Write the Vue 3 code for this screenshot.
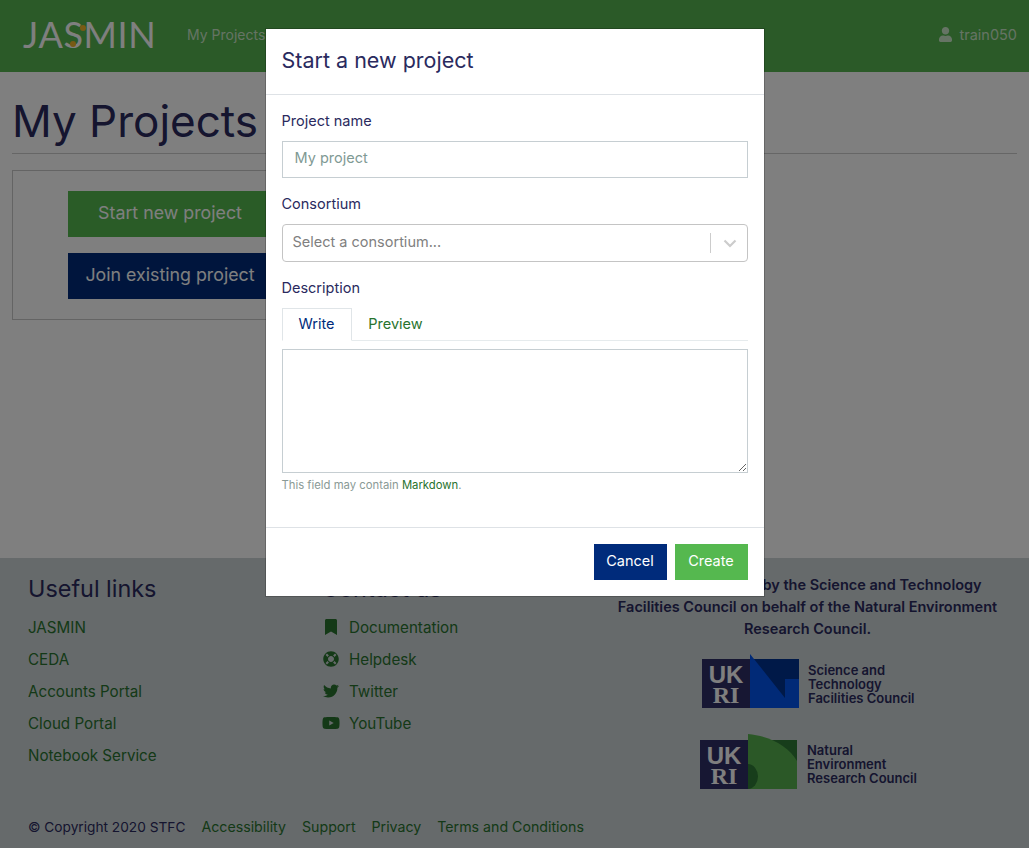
<template>
  <div class="page">
    <header class="navbar">
      <div class="brand">
        <span class="brand-text">JASMIN</span>
        <i class="dot dot-a"></i>
        <i class="dot dot-b"></i>
      </div>
      <a class="nav-link">My Projects</a>
      <div class="nav-user">
        <svg class="user-icon" viewBox="0 0 448 512"><path :d="icons.user" /></svg>
        <span>train050</span>
      </div>
    </header>

    <main class="content">
      <h1>My Projects</h1>
      <hr />
      <div class="card">
        <button class="big-btn green">Start new project</button>
        <button class="big-btn blue">Join existing project</button>
      </div>
    </main>

    <footer class="footer">
      <div class="footer-cols">
        <div class="col">
          <h4>Useful links</h4>
          <a v-for="l in usefulLinks" :key="l" class="foot-link">{{ l }}</a>
        </div>
        <div class="col">
          <h4>Contact us</h4>
          <a v-for="c in contacts" :key="c.label" class="foot-link with-icon">
            <span class="icon-box">
              <svg :viewBox="c.box" :width="c.w" :height="c.h"><path :d="c.path" /></svg>
            </span>
            {{ c.label }}
          </a>
        </div>
        <div class="col col-right">
          <p class="funded">JASMIN is funded by the Science and Technology Facilities Council on behalf of the Natural Environment Research Council.</p>
          <div class="org org-stfc">
            <svg width="97" height="55" viewBox="0 0 97 55">
              <rect x="0" y="5" width="48" height="49" fill="#2e2f66" />
              <path d="M48 0 L48 54 H97 V5 H52 Z" fill="#0254ee" />
              <path d="M52 5 H97 V25 H83 V44 Z" fill="#003290" />
              <text class="ukri"><tspan x="24" y="29" class="uk">UK</tspan><tspan x="24" y="49" class="ri">RI</tspan></text>
            </svg>
            <div class="org-name">Science and<br />Technology<br />Facilities Council</div>
          </div>
          <div class="org org-nerc">
            <svg width="97" height="56" viewBox="0 0 97 56">
              <rect x="0" y="6" width="48" height="49" fill="#2e2f66" />
              <rect x="48" y="6" width="49" height="49" fill="#2f7a36" />
              <path d="M48 0 C70 2 88 12 97 27 V55 H48 Z" fill="#57b14f" />
              <path d="M48 30 A10 12.5 0 0 1 48 55 Z" fill="#2f7a36" />
              <text class="ukri"><tspan x="24" y="30" class="uk">UK</tspan><tspan x="24" y="50" class="ri">RI</tspan></text>
            </svg>
            <div class="org-name">Natural<br />Environment<br />Research Council</div>
          </div>
        </div>
      </div>
      <div class="footer-bottom">
        <span class="copy">© Copyright 2020 STFC</span>
        <a v-for="l in legalLinks" :key="l" class="foot-link-inline">{{ l }}</a>
      </div>
    </footer>

    <div class="backdrop">
      <div class="modal">
        <div class="modal-header">Start a new project</div>
        <div class="modal-body">
          <label>Project name</label>
          <input class="text-input" type="text" placeholder="My project" />
          <label>Consortium</label>
          <div class="select">
            <span class="select-text">Select a consortium...</span>
            <span class="select-sep"></span>
            <svg class="chevron" viewBox="0 0 20 20"><path d="M4.5 7.5 L10 13 L15.5 7.5" /></svg>
          </div>
          <label>Description</label>
          <div class="tabs">
            <a class="tab active">Write</a>
            <a class="tab">Preview</a>
          </div>
          <textarea class="area"></textarea>
          <small class="help">This field may contain <a>Markdown</a>.</small>
        </div>
        <div class="modal-footer">
          <button class="btn blue">Cancel</button>
          <button class="btn green">Create</button>
        </div>
      </div>
    </div>
  </div>
</template>

<script setup>
const icons = {
  user: 'M224 256c70.7 0 128-57.3 128-128S294.7 0 224 0 96 57.3 96 128s57.3 128 128 128zm89.6 32h-16.7c-22.2 10.2-46.9 16-72.9 16s-50.6-5.8-72.9-16h-16.7C60.2 288 0 348.2 0 422.4V464c0 26.5 21.5 48 48 48h352c26.5 0 48-21.5 48-48v-41.6c0-74.2-60.2-134.4-134.4-134.4z'
}

const usefulLinks = ['JASMIN', 'CEDA', 'Accounts Portal', 'Cloud Portal', 'Notebook Service']
const legalLinks = ['Accessibility', 'Support', 'Privacy', 'Terms and Conditions']

const contacts = [
  {
    label: 'Documentation',
    box: '0 0 384 512',
    w: 12,
    h: 16,
    path: 'M0 512V48C0 21.49 21.49 0 48 0h288c26.51 0 48 21.49 48 48v464L192 400 0 512z'
  },
  {
    label: 'Helpdesk',
    box: '0 0 512 512',
    w: 16,
    h: 16,
    path: 'M256 8C119.033 8 8 119.033 8 256s111.033 248 248 248 248-111.033 248-248S392.967 8 256 8zm173.696 119.559l-63.399 63.399c-10.987-18.559-26.67-34.252-45.255-45.255l63.399-63.399a218.396 218.396 0 0 1 45.255 45.255zM256 352c-53.019 0-96-42.981-96-96s42.981-96 96-96 96 42.981 96 96-42.981 96-96 96zM127.559 82.304l63.399 63.399c-18.559 10.987-34.252 26.67-45.255 45.255l-63.399-63.399a218.372 218.372 0 0 1 45.255-45.255zM82.304 384.441l63.399-63.399c10.987 18.559 26.67 34.252 45.255 45.255l-63.399 63.399a218.396 218.396 0 0 1-45.255-45.255zm302.137 45.255l-63.399-63.399c18.559-10.987 34.252-26.67 45.255-45.255l63.399 63.399a218.403 218.403 0 0 1-45.255 45.255z'
  },
  {
    label: 'Twitter',
    box: '0 0 512 512',
    w: 16,
    h: 16,
    path: 'M459.37 151.716c.325 4.548.325 9.097.325 13.645 0 138.72-105.583 298.558-298.558 298.558-59.452 0-114.68-17.219-161.137-47.106 8.447.974 16.568 1.299 25.34 1.299 49.055 0 94.213-16.568 130.274-44.832-46.132-.975-84.792-31.188-98.112-72.772 6.498.974 12.995 1.624 19.818 1.624 9.421 0 18.843-1.3 27.614-3.573-48.081-9.747-84.143-51.98-84.143-102.985v-1.299c13.969 7.797 30.214 12.67 47.431 13.319-28.264-18.843-46.781-51.005-46.781-87.391 0-19.492 5.197-37.36 14.294-52.954 51.655 63.675 129.3 105.258 216.365 109.807-1.624-7.797-2.599-15.918-2.599-24.04 0-57.828 46.782-104.934 104.934-104.934 30.213 0 57.502 12.67 76.67 33.137 23.715-4.548 46.456-13.32 66.599-25.34-7.798 24.366-24.366 44.833-46.132 57.827 21.117-2.273 41.584-8.122 60.426-16.243-14.292 20.791-32.161 39.308-52.628 54.253z'
  },
  {
    label: 'YouTube',
    box: '0 0 576 512',
    w: 18,
    h: 16,
    path: 'M549.655 124.083c-6.281-23.65-24.787-42.276-48.284-48.597C458.781 64 288 64 288 64S117.22 64 74.629 75.486c-23.497 6.322-42.003 24.947-48.284 48.597-11.412 42.867-11.412 132.305-11.412 132.305s0 89.438 11.412 132.305c6.281 23.65 24.787 41.5 48.284 47.821C117.22 448 288 448 288 448s170.78 0 213.371-11.486c23.497-6.321 42.003-24.171 48.284-47.821 11.412-42.867 11.412-132.305 11.412-132.305s0-89.438-11.412-132.305zm-317.51 213.508V175.185l142.739 81.205-142.739 81.201z'
  }
]
</script>

<style>
html,
body {
  margin: 0;
  overflow: hidden;
}
</style>

<style scoped>
.page {
  height: 848px;
  display: flex;
  flex-direction: column;
  background: #fff;
  color: #2a2a5e;
  font-family: Inter, "Noto Sans", sans-serif;
  font-size: 15.2px;
}

.navbar {
  height: 72px;
  flex: none;
  box-sizing: border-box;
  display: flex;
  align-items: center;
  padding: 0 12px 4px 23px;
  background: #56b550;
  color: rgba(255, 255, 255, 0.7);
}

.brand {
  position: relative;
  width: 130px;
  margin-right: 34px;
  height: 40px;
}

.brand-text {
  font-family: Lato, sans-serif;
  font-weight: 400;
  font-size: 36px;
  line-height: 40px;
  letter-spacing: 0.6px;
  color: #fff;
}

.dot {
  position: absolute;
  width: 6px;
  height: 6px;
  border-radius: 50%;
  background: #f0b428;
}

.dot-a {
  left: 57px;
  top: 11px;
}

.dot-b {
  left: 47px;
  top: 27px;
}

.nav-link {
  font-size: 14px;
}

.nav-user {
  margin-left: auto;
  display: flex;
  align-items: center;
  gap: 7px;
  font-size: 14.5px;
}

.user-icon {
  width: 13px;
  height: 15px;
  fill: rgba(255, 255, 255, 0.7);
}

.content {
  flex: 1;
  padding: 0 12px;
}

h1 {
  margin: 22px 0 0;
  font-size: 44px;
  line-height: 54px;
  font-weight: 400;
  color: #2a2a5e;
}

hr {
  margin: 5px 0 16px;
  border: 0;
  border-top: 1px solid #ccc;
}

.card {
  width: 316px;
  height: 150px;
  box-sizing: border-box;
  border: 1px solid #c8c8c8;
  display: flex;
  flex-direction: column;
  align-items: center;
  gap: 16px;
  padding-top: 20px;
}

.big-btn {
  width: 204px;
  height: 46px;
  padding: 0 0 4px;
  border: 0;
  font-family: inherit;
  font-size: 17.8px;
  color: #fff;
}

.green {
  background: #55b84f;
}

.blue {
  background: #002b7b;
}

.footer {
  height: 290px;
  flex: none;
  box-sizing: border-box;
  padding: 16px 28px 0;
  background: #cdd4d6;
  position: relative;
}

.footer-cols {
  display: grid;
  grid-template-columns: 294px 294px 1fr;
  height: 243px;
}

h4 {
  margin: 0 0 7px;
  font-size: 23.4px;
  line-height: 30px;
  font-weight: 400;
  color: #2a2a5e;
}

.foot-link {
  display: flex;
  align-items: center;
  height: 32px;
  color: #28732e;
}

.icon-box {
  width: 18px;
  margin-right: 9px;
  display: flex;
  justify-content: center;
}

.icon-box svg {
  fill: #28732e;
}

.col-right {
  text-align: center;
  margin-right: 2px;
}

.funded {
  margin: 0 0 14px;
  font-size: 14.5px;
  line-height: 22px;
  font-weight: 600;
}

.org {
  display: flex;
  align-items: flex-start;
  gap: 9px;
  margin-left: 86px;
  text-align: left;
}

.org-nerc {
  margin-top: 25px;
  margin-left: 84px;
  gap: 10px;
}

.org-name {
  margin-top: 9px;
  font-size: 13px;
  line-height: 14px;
  font-weight: 600;
}

.ukri {
  text-anchor: middle;
  fill: #fff;
  font-weight: 700;
  font-size: 24px;
}

.uk {
  font-family: "Liberation Sans", sans-serif;
}

.ri {
  font-family: "Liberation Serif", serif;
}

.footer-bottom {
  display: flex;
  gap: 16px;
  align-items: center;
  line-height: 20px;
  font-size: 14.2px;
}

.copy {
  font-size: 13.7px;
}

.foot-link-inline {
  color: #28732e;
}

.backdrop {
  position: fixed;
  inset: 0;
  display: flex;
  justify-content: center;
  align-items: flex-start;
  padding-top: 28px;
  background: rgba(0, 0, 0, 0.5);
}

.modal {
  width: 500px;
  box-sizing: border-box;
  background: #fff;
  background-clip: padding-box;
  border: 1px solid rgba(0, 0, 0, 0.2);
}

.modal-header {
  height: 66px;
  box-sizing: border-box;
  padding: 0 16px 4px;
  display: flex;
  align-items: center;
  font-size: 21.5px;
  border-bottom: 1px solid #dee2e6;
}

.modal-body {
  height: 432px;
  box-sizing: border-box;
  padding: 16px;
  display: flex;
  flex-direction: column;
}

label {
  height: 20px;
  line-height: 20px;
  font-size: 14.5px;
}

.text-input {
  height: 37px;
  margin: 10px 0 16px;
  padding: 0 12px 5px;
  box-sizing: border-box;
  border: 1px solid #c6ced2;
  outline: 0;
  font-family: inherit;
  font-size: 14.5px;
}

.text-input::placeholder {
  color: #7f9a94;
}

.select {
  height: 38px;
  margin: 10px 0 16px;
  box-sizing: border-box;
  display: flex;
  align-items: center;
  padding-left: 10px;
  border: 1px solid #c4c4c4;
  border-radius: 4px;
}

.select-text {
  flex: 1;
  padding-bottom: 4px;
  font-size: 14.5px;
  color: #808080;
}

.select-sep {
  width: 1px;
  height: 20px;
  background: #ccc;
}

.chevron {
  width: 20px;
  height: 20px;
  margin: 0 7px 0 9px;
  fill: none;
  stroke: #ccc;
  stroke-width: 2.2;
}

.tabs {
  height: 33px;
  margin-top: 10px;
  display: flex;
  box-sizing: border-box;
  border-bottom: 1px solid #e6ebed;
}

.tab {
  width: 70px;
  height: 33px;
  box-sizing: border-box;
  display: flex;
  align-items: center;
  justify-content: center;
  padding-bottom: 3px;
  color: #28732e;
  font-size: 14.5px;
}

.tab.active {
  color: #002b7b;
  background: #fff;
  border: 1px solid #e0e5e8;
  border-bottom-color: #fff;
}

.tab + .tab {
  width: 86px;
  padding-left: 2px;
}

.area {
  height: 124px;
  margin-top: 8px;
  box-sizing: border-box;
  border: 1px solid #c6ced2;
  outline: 0;
  display: block;
}

.help {
  margin-top: 5px;
  font-size: 11.3px;
  line-height: 14px;
  color: #8a9a96;
}

.help a {
  color: #28732e;
}

.modal-footer {
  height: 69px;
  box-sizing: border-box;
  display: flex;
  justify-content: flex-end;
  align-items: flex-start;
  gap: 8px;
  padding: 16px;
  border-top: 1px solid #dee2e6;
}

.btn {
  width: 73px;
  height: 36px;
  padding: 0 0 3px;
  border: 0;
  color: #fff;
  font-family: inherit;
  font-size: 14.5px;
}
</style>
